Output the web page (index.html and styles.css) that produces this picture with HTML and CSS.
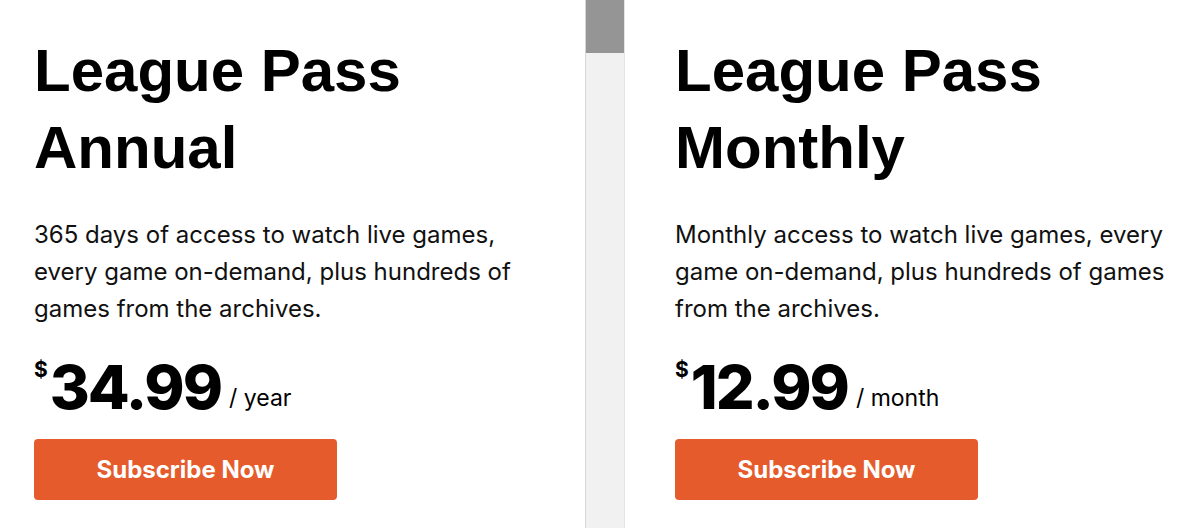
FILE: index.html
```html
<!DOCTYPE html>
<html>
<head>
<meta charset="utf-8">
<link rel="stylesheet" href="styles.css">
</head>
<body>
<div class="page">
  <section class="plan">
    <h2 class="title">League Pass<br>Annual</h2>
    <p class="desc">365 days of access to watch live games, every game on-demand, plus hundreds of games from the archives.</p>
    <div class="price"><span class="cur">$</span><span class="amount">34.99</span><span class="per">/ year</span></div>
    <button class="btn">Subscribe Now</button>
  </section>
  <div class="scrollbar"><div class="thumb"></div></div>
  <section class="plan">
    <h2 class="title">League Pass<br>Monthly</h2>
    <p class="desc">Monthly access to watch live games, every game on-demand, plus hundreds of games from the archives.</p>
    <div class="price"><span class="cur">$</span><span class="amount">12.99</span><span class="per">/ month</span></div>
    <button class="btn">Subscribe Now</button>
  </section>
</div>
</body>
</html>
```

FILE: styles.css
```css
html, body {
  margin: 0;
  padding: 0;
  background: #ffffff;
}
body {
  font-family: "Inter", "Liberation Sans", sans-serif;
  color: #000;
  width: 1200px;
  height: 528px;
  overflow: hidden;
}
.page {
  display: flex;
  height: 528px;
}
.plan {
  flex: 0 0 auto;
  width: 551px;
  padding: 32px 0 0 34px;
  box-sizing: content-box;
}
.plan:last-child {
  width: 525px;
  padding-left: 50px;
}
.title {
  margin: 0;
  font-family: "Liberation Sans", sans-serif;
  font-weight: 700;
  font-size: 60px;
  line-height: 77px;
  letter-spacing: 0;
}
.desc {
  margin: 30px 0 0;
  width: 500px;
  font-family: "Inter", sans-serif;
  font-size: 24px;
  line-height: 37px;
  color: #111;
}
.price {
  display: flex;
  align-items: baseline;
  margin-top: 30px;
  height: 60px;
}
.cur {
  font-family: "Inter", sans-serif;
  font-weight: 700;
  font-size: 21px;
  align-self: flex-start;
  margin-top: 0;
  margin-right: 2px;
}
.amount {
  font-family: "Inter", sans-serif;
  font-weight: 800;
  font-size: 61px;
  line-height: 60px;
  letter-spacing: -2px;
}
.per {
  font-family: "Inter", sans-serif;
  font-size: 23px;
  margin-left: 8px;
  position: relative;
  top: -3px;
}
.btn {
  display: block;
  margin-top: 22px;
  width: 303px;
  height: 61px;
  border: none;
  border-radius: 4px;
  background: #e55b2b;
  color: #fff;
  font-family: "Inter", sans-serif;
  font-weight: 700;
  font-size: 24px;
  padding: 0;
}
.scrollbar {
  flex: 0 0 38px;
  background: #f1f1f1;
  border-left: 1px solid #d6d6d6;
  border-right: 1px solid #e4e4e4;
}
.thumb {
  height: 53px;
  background: #959595;
}
```
